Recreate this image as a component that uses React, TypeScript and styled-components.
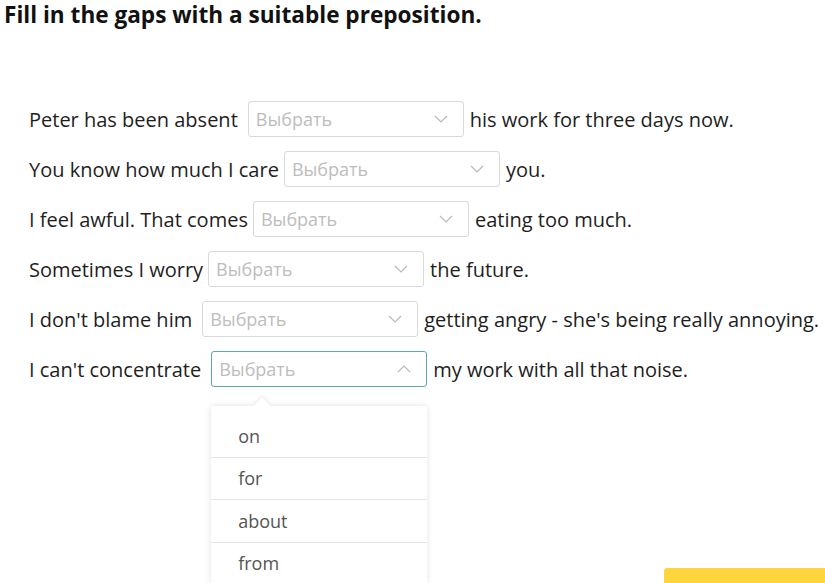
import React from "react";
import styled, { createGlobalStyle } from "styled-components";

const rows = [
  { before: "Peter has been absent", after: "his work for three days now.", gap: 10 },
  { before: "You know how much I care", after: "you.", gap: 5 },
  { before: "I feel awful. That comes", after: "eating too much.", gap: 5 },
  { before: "Sometimes I worry", after: "the future.", gap: 5 },
  { before: "I don't blame him", after: "getting angry - she's being really annoying.", gap: 10 },
  { before: "I can't concentrate", after: "my work with all that noise.", gap: 10, open: true },
];

const options = ["on", "for", "about", "from"];

export default function App() {
  return (
    <Page>
      <GlobalStyle />
      <Title>Fill in the gaps with a suitable preposition.</Title>
      <List>
        {rows.map((r, i) => (
          <Row key={i}>
            <Text>{r.before}</Text>
            <SelectWrap $gap={r.gap}>
              <SelectBox $open={!!r.open}>
                <Placeholder>Выбрать</Placeholder>
                <Chevron up={!!r.open} />
              </SelectBox>
              {r.open && (
                <Menu>
                  {options.map((o) => (
                    <MenuItem key={o}>{o}</MenuItem>
                  ))}
                </Menu>
              )}
            </SelectWrap>
            <Text>{r.after}</Text>
          </Row>
        ))}
      </List>
      <NextButton />
    </Page>
  );
}

function Chevron({ up }: { up: boolean }) {
  return (
    <ChevronSvg width="14" height="8" viewBox="0 0 14 8">
      <path
        d={up ? "M1 7 L7 1 L13 7" : "M1 1 L7 7 L13 1"}
        fill="none"
        stroke="#b9b9b9"
        strokeWidth="1.2"
      />
    </ChevronSvg>
  );
}

const GlobalStyle = createGlobalStyle`
  body {
    margin: 0;
    background: #fff;
    font-family: "Open Sans", "Noto Sans", sans-serif;
    overflow: hidden;
  }
`;

const Page = styled.div`
  width: 825px;
  height: 583px;
  overflow: hidden;
`;

const Title = styled.h1`
  margin: 0;
  padding: 0 4px;
  font-size: 22.6px;
  line-height: 30px;
  font-weight: 700;
  color: #111;
`;

const List = styled.div`
  display: flex;
  flex-direction: column;
  padding: 64px 0 0 29px;
`;

const Row = styled.div`
  display: flex;
  align-items: center;
  height: 50px;
`;

const Text = styled.span`
  font-size: 20px;
  color: #1e1e1e;
  white-space: nowrap;
`;

const SelectWrap = styled.div<{ $gap: number }>`
  position: relative;
  margin: 0 6px 0 ${(p) => p.$gap}px;
`;

const SelectBox = styled.div<{ $open: boolean }>`
  box-sizing: border-box;
  width: 216px;
  height: 36px;
  display: flex;
  align-items: center;
  justify-content: space-between;
  padding: 0 15px 0 7px;
  border: 1px solid ${(p) => (p.$open ? "#5aa9ae" : "#d9d9d9")};
  border-radius: 3px;
  background: #fff;
`;

const Placeholder = styled.span`
  font-size: 18px;
  color: #bdbdbd;
`;

const ChevronSvg = styled.svg`
  display: block;
`;

const Menu = styled.div`
  position: absolute;
  top: 55px;
  left: 0;
  width: 216px;
  padding-top: 9px;
  background: #fff;
  border-radius: 3px;
  box-shadow: 0 0 6px rgba(0, 0, 0, 0.12);
  z-index: 2;

  &::before {
    content: "";
    position: absolute;
    top: -6px;
    left: 45px;
    width: 12px;
    height: 12px;
    background: #fff;
    transform: rotate(45deg);
    box-shadow: -2px -2px 4px rgba(0, 0, 0, 0.06);
  }
`;

const MenuItem = styled.div`
  position: relative;
  height: 42.5px;
  display: flex;
  align-items: center;
  padding-left: 27px;
  font-size: 18px;
  color: #555;
  background: #fff;
  border-bottom: 1px solid #e6e6e6;
  box-sizing: border-box;
`;

const NextButton = styled.div`
  position: fixed;
  left: 664px;
  top: 568px;
  width: 200px;
  height: 50px;
  background: #ffd53d;
  border-radius: 3px;
`;
